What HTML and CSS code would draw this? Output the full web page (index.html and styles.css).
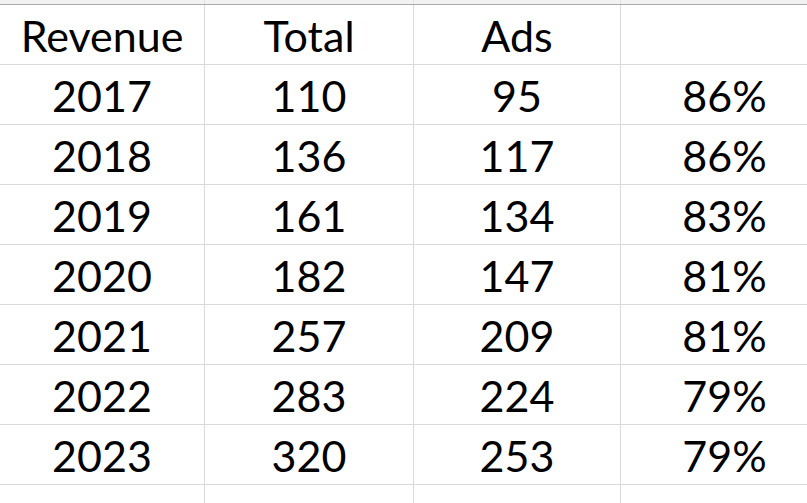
FILE: index.html
```html
<!DOCTYPE html>
<html>
<head>
<meta charset="utf-8">
<link rel="stylesheet" href="styles.css">
</head>
<body>
<div class="sheet">
  <div class="strip">
    <div class="scell"></div><div class="scell"></div><div class="scell"></div><div class="scell"></div>
  </div>
  <div class="grid">
    <div class="cell">Revenue</div><div class="cell">Total</div><div class="cell">Ads</div><div class="cell"></div>
    <div class="cell">2017</div><div class="cell">110</div><div class="cell">95</div><div class="cell">86%</div>
    <div class="cell">2018</div><div class="cell">136</div><div class="cell">117</div><div class="cell">86%</div>
    <div class="cell">2019</div><div class="cell">161</div><div class="cell">134</div><div class="cell">83%</div>
    <div class="cell">2020</div><div class="cell">182</div><div class="cell">147</div><div class="cell">81%</div>
    <div class="cell">2021</div><div class="cell">257</div><div class="cell">209</div><div class="cell">81%</div>
    <div class="cell">2022</div><div class="cell">283</div><div class="cell">224</div><div class="cell">79%</div>
    <div class="cell">2023</div><div class="cell">320</div><div class="cell">253</div><div class="cell">79%</div>
    <div class="cell"></div><div class="cell"></div><div class="cell"></div><div class="cell"></div>
  </div>
</div>
</body>
</html>
```
FILE: styles.css
```css
html, body {
  margin: 0;
  padding: 0;
  background: #ffffff;
  overflow: hidden;
}
.sheet {
  width: 807px;
  height: 503px;
  overflow: hidden;
}
.strip {
  display: grid;
  grid-template-columns: 205px 209px 207px 208px;
  height: 4px;
  background: #f2f2f2;
  border-bottom: 1px solid #ababab;
  width: 829px;
}
.scell {
  border-right: 1px solid #e2e2e2;
}
.grid {
  display: grid;
  grid-template-columns: 205px 209px 207px 208px;
  grid-auto-rows: 60px;
  width: 829px;
}
.cell {
  box-sizing: border-box;
  border-right: 1px solid #dadada;
  border-bottom: 1px solid #dadada;
  display: flex;
  align-items: flex-end;
  justify-content: center;
  padding-bottom: 2px;
  font-family: "Lato", "Open Sans", sans-serif;
  font-size: 43px;
  line-height: 52px;
  color: #000;
}
```
